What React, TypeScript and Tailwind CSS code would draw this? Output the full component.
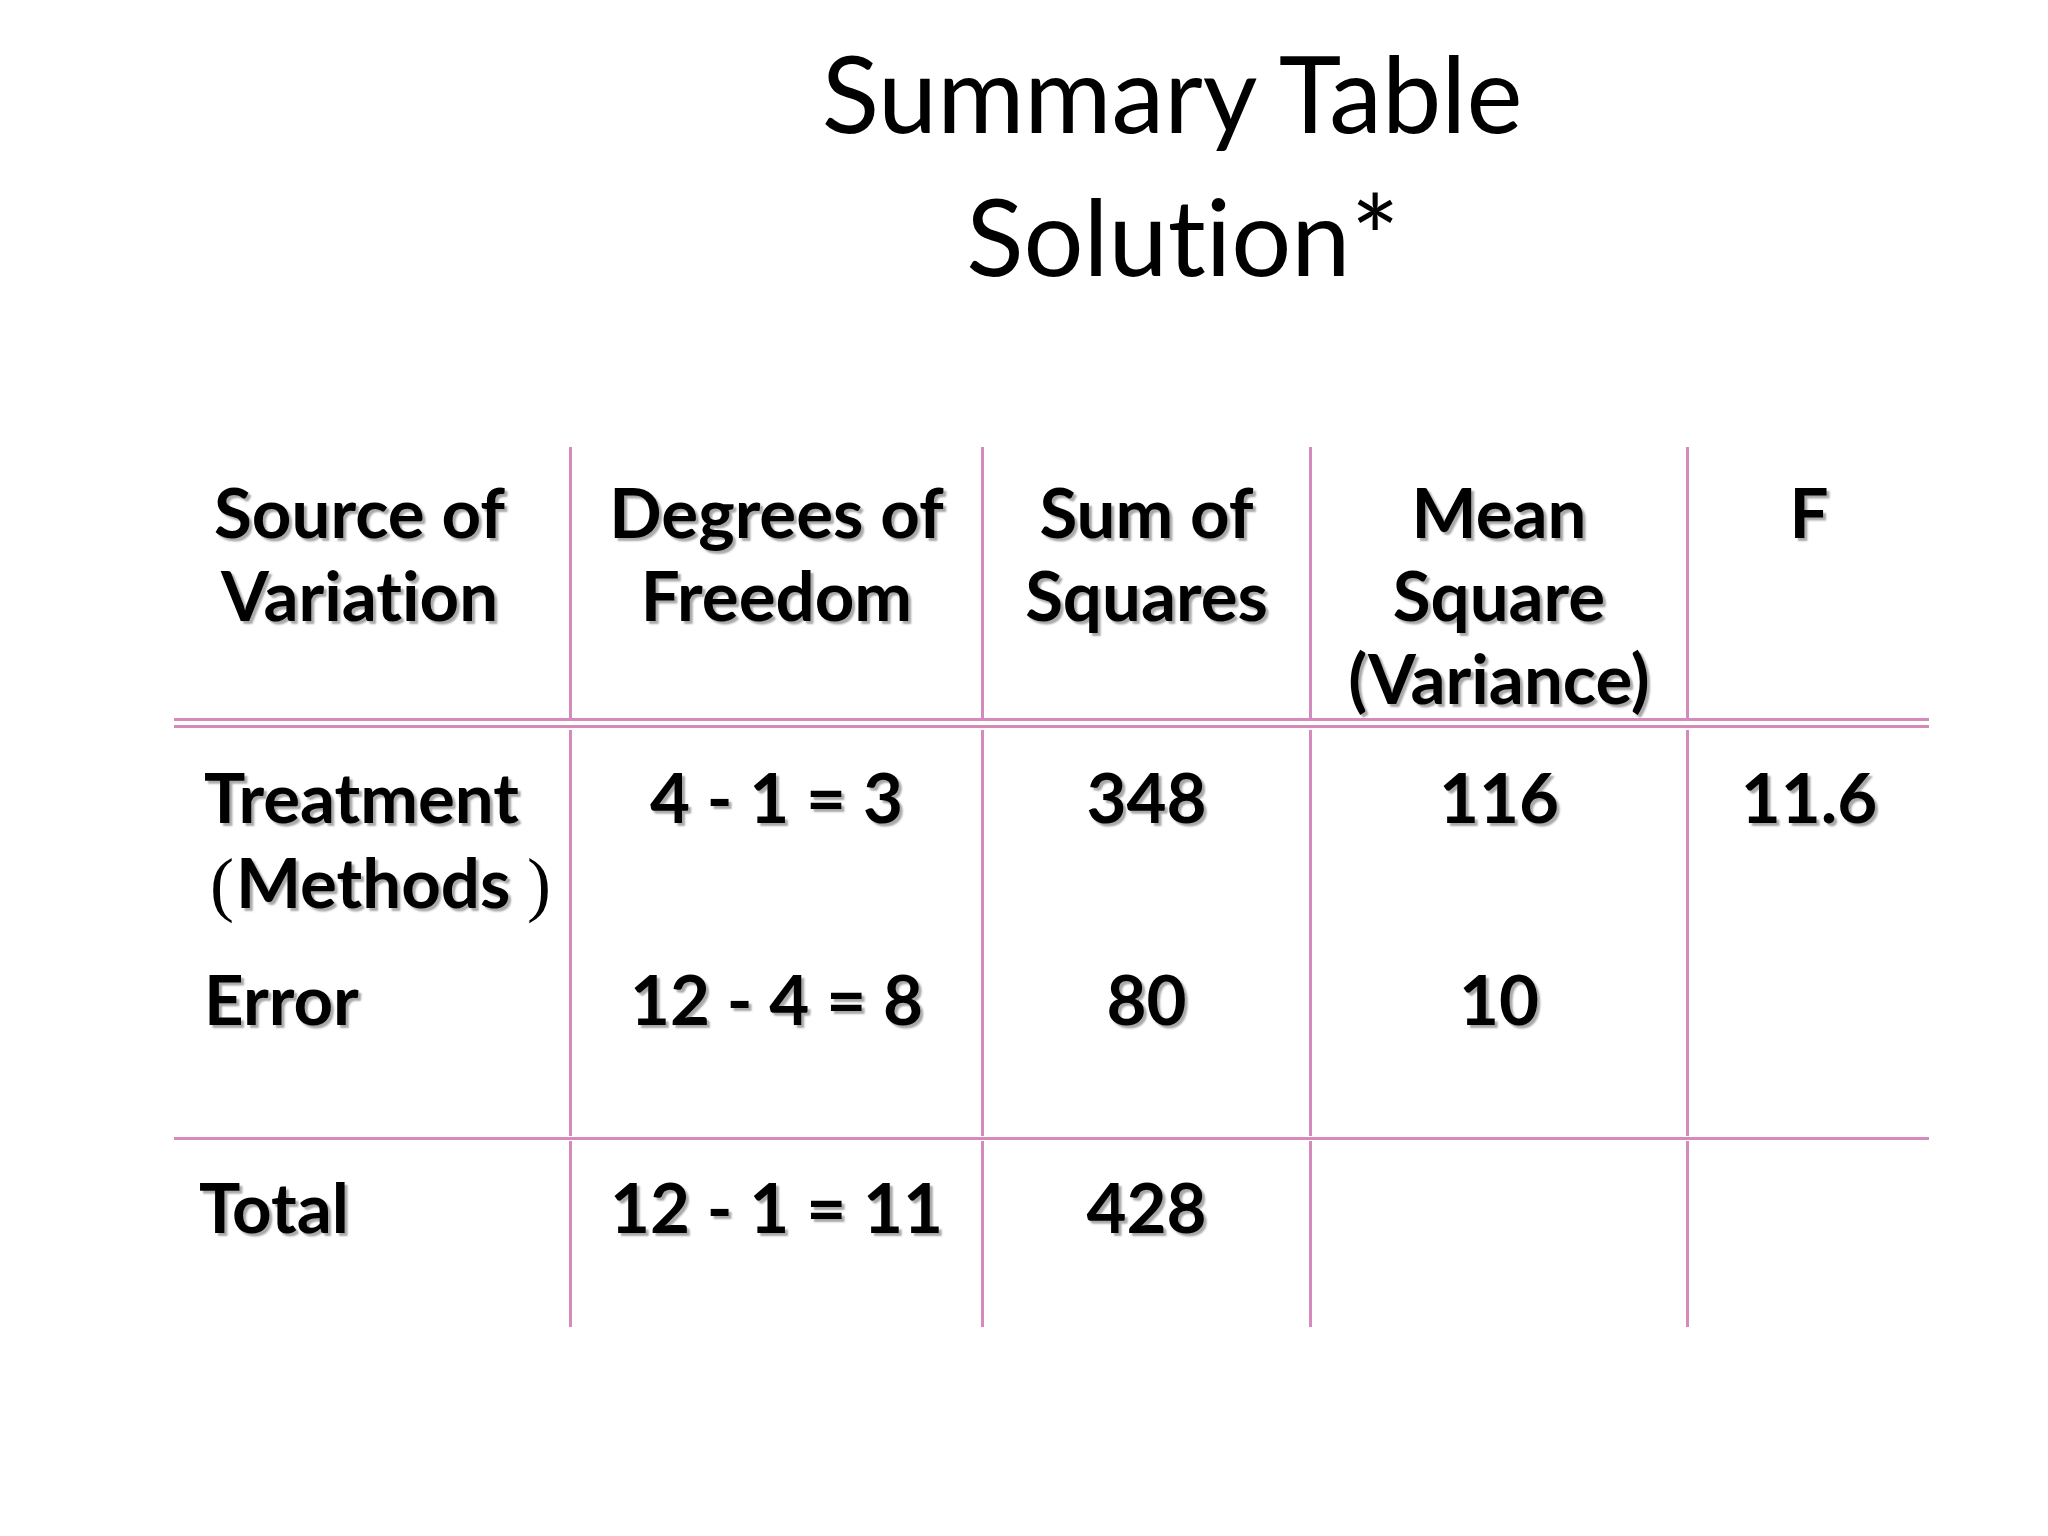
import React from "react";

const cols = "grid grid-cols-[395px_412px_328px_377px_243px]";
const vline = "border-l-[3px] border-[#d68abb]";
const txt = "font-bold text-[69px] text-black [text-shadow:3px_3px_2px_#a9a9a9]";

function Row({
  height,
  pt,
  cells,
  first,
  lh = "leading-[83px]",
}: {
  height: string;
  pt: string;
  cells: React.ReactNode[];
  first: string;
  lh?: string;
}) {
  return (
    <div className={`${cols} ${height}`}>
      {cells.map((c, i) => (
        <div
          key={i}
          className={`${i > 0 ? vline : ""} ${pt} ${txt} ${lh} ${i === 0 ? first : "text-center"}`}
        >
          {c}
        </div>
      ))}
    </div>
  );
}

export default function App() {
  return (
    <div className="w-[2048px] h-[1536px] bg-white overflow-hidden font-['Lato','Open_Sans',sans-serif] [font-variant-ligatures:none]">
      <div className="pt-[22px] pl-[296px] text-center text-[106px] leading-[140px] text-black">
        <div>Summary Table</div>
        <div className="pl-[22px]">
          Solution<span className="relative top-[4px] text-[116px]">*</span>
        </div>
      </div>

      <div className="mt-[142px] ml-[174px] w-[1755px]">
        <Row
          height="h-[271px]"
          pt="pt-[23px]"
          first="text-center pl-[22px] pr-[46px]"
          cells={[
            <>Source of<br />Variation</>,
            <>Degrees of<br />Freedom</>,
            <>Sum of<br />Squares</>,
            <>Mean<br />Square<br />(Variance)</>,
            <>F</>,
          ]}
        />
        <div className="h-[10px] border-y-[3px] border-[#d68abb]" />
        <div className="h-[2px]" />
        <Row
          height="h-[184px]"
          pt="pt-[24px]"
          lh="leading-[85px]"
          first="pl-[30px]"
          cells={[
            <>
              Treatment
              <br />
              <span className="ml-[6px] mr-[2px] font-['Liberation_Serif',serif] font-normal [text-shadow:none] text-[72px]">(</span>
              Methods{" "}
              <span className="font-['Liberation_Serif',serif] font-normal [text-shadow:none] text-[72px]">)</span>
            </>,
            <>4 - 1 = 3</>,
            <>348</>,
            <>116</>,
            <>11.6</>,
          ]}
        />
        <div className="h-[2px]" />
        <Row
          height="h-[220px]"
          pt="pt-[41px]"
          first="pl-[30px]"
          cells={[<>Error</>, <>12 - 4 = 8</>, <>80</>, <>10</>, <></>]}
        />
        <div className="h-[1px]" />
        <div className="h-[3px] bg-[#d68abb]" />
        <div className="h-[1px]" />
        <Row
          height="h-[186px]"
          pt="pt-[24px]"
          first="pl-[25px]"
          cells={[<>Total</>, <>12 - 1 = 11</>, <>428</>, <></>, <></>]}
        />
      </div>
    </div>
  );
}
